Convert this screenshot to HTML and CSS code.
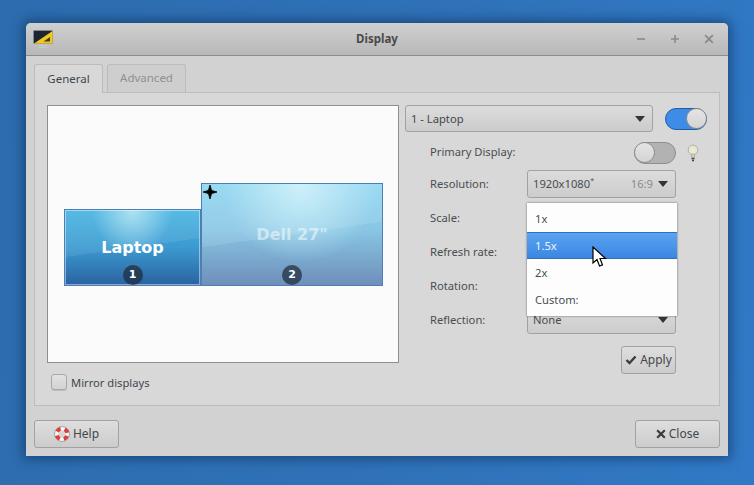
FILE: index.html
```html
<!DOCTYPE html>
<html lang="en">
<head>
  <meta charset="utf-8">
  <title>Display</title>
  <link rel="stylesheet" href="styles.css">
</head>
<body>
<div class="window">
  <header class="titlebar">
    <svg class="app-icon" width="20" height="18" viewBox="0 0 20 18">
      <rect x="0.3" y="0.3" width="19.4" height="13.4" fill="#1d2530" stroke="#a8a8a8" stroke-width="0.6"/>
      <path d="M1 13.5 L19.5 1 L19.5 13.5 Z" fill="#f0c91e"/>
      <path d="M10.5 11.5 L17 7 L17 11.5 Z" fill="#3f3e30"/>
      <rect x="6" y="15" width="8" height="1" fill="#c4ccd4"/>
      <rect x="6" y="17" width="8" height="1" fill="#c4ccd4"/>
    </svg>
    <span class="title">Display</span>
    <div class="win-buttons">
      <svg width="10" height="10" viewBox="0 0 10 10"><path d="M1 5H9" stroke="#8a8a8a" stroke-width="1.6"/></svg>
      <svg width="10" height="10" viewBox="0 0 10 10"><path d="M1 5H9M5 1V9" stroke="#8a8a8a" stroke-width="1.6"/></svg>
      <svg width="10" height="10" viewBox="0 0 10 10"><path d="M1.2 1.2L8.8 8.8M8.8 1.2L1.2 8.8" stroke="#8a8a8a" stroke-width="1.8"/></svg>
    </div>
  </header>

  <div class="content">
    <div class="tabs">
      <div class="tab active">General</div>
      <div class="tab">Advanced</div>
    </div>
    <div class="panel">
      <div class="left">
        <div class="preview">
          <div class="monitor laptop">
            <span class="mon-name">Laptop</span>
            <span class="badge">1</span>
          </div>
          <div class="monitor dell">
            <svg class="star" width="16" height="16" viewBox="0 0 16 16"><path d="M8 1 L9.6 6.4 L15 8 L9.6 9.6 L8 15 L6.4 9.6 L1 8 L6.4 6.4 Z" fill="#000" stroke="#000" stroke-width="0.8"/></svg>
            <span class="mon-name">Dell 27"</span>
            <span class="badge">2</span>
          </div>
        </div>
        <label class="mirror"><span class="checkbox"></span>Mirror displays</label>
      </div>

      <div class="right">
        <div class="top-row">
          <div class="combo main-combo"><span>1 - Laptop</span><i class="arrow"></i></div>
          <div class="switch on"><span class="knob"></span></div>
        </div>

        <div class="form">
          <div class="row primary">
            <span class="label">Primary Display:</span>
            <div class="switch off"><span class="knob"></span></div>
            <svg class="bulb" width="12" height="18" viewBox="0 0 12 18">
              <circle cx="6" cy="6" r="4.8" fill="#e6e6de" stroke="#b0b0a6"/>
              <circle cx="6" cy="6.5" r="2" fill="#f4eeb0"/>
              <path d="M4.5 10 L7.5 10 L7.5 13 L4.5 13 Z" fill="#d8d8c8" stroke="#9a9a90" stroke-width="0.6"/>
              <path d="M4.5 14.5H7.5M5 16.5H7" stroke="#444" stroke-width="1.4"/>
            </svg>
          </div>
          <div class="row">
            <span class="label">Resolution:</span>
            <div class="combo field"><span>1920x1080<sup>*</sup></span><em>16:9</em><i class="arrow"></i></div>
          </div>
          <div class="row"><span class="label">Scale:</span></div>
          <div class="row"><span class="label">Refresh rate:</span></div>
          <div class="row"><span class="label">Rotation:</span></div>
          <div class="row">
            <span class="label">Reflection:</span>
            <div class="combo field"><span>None</span><i class="arrow"></i></div>
          </div>
          <div class="apply-row">
            <button class="btn apply">
              <svg width="12" height="10" viewBox="0 0 12 10"><path d="M1.5 5 L4.5 8 L10.5 1.5" fill="none" stroke="#3c3c3c" stroke-width="2.4"/></svg>
              <span>Apply</span>
            </button>
          </div>

          <div class="menu">
            <div class="item">1x</div>
            <div class="item selected">1.5x</div>
            <div class="item">2x</div>
            <div class="item">Custom:</div>
            <svg class="cursor" width="16" height="24" viewBox="0 0 16 24">
              <path d="M1 1 L1 17 L5 13.5 L7.5 20 L10.5 18.8 L8 12.5 L13.5 12.5 Z" fill="#fff" stroke="#000" stroke-width="1.2"/>
            </svg>
          </div>
        </div>
      </div>
    </div>

    <div class="actions">
      <button class="btn wide">
        <svg width="16" height="16" viewBox="0 0 16 16">
          <circle cx="8" cy="8" r="5.5" fill="none" stroke="#f4f4f4" stroke-width="4"/>
          <circle cx="8" cy="8" r="5.5" fill="none" stroke="#e03a3a" stroke-width="4" stroke-dasharray="4.32 4.32" stroke-dashoffset="-2.16"/>
          <circle cx="8" cy="8" r="7.5" fill="none" stroke="#8a8a8a" stroke-width="0.7"/>
        </svg>
        <span>Help</span>
      </button>
      <button class="btn wide">
        <svg width="10" height="10" viewBox="0 0 10 10"><path d="M1.2 1.2L8.8 8.8M8.8 1.2L1.2 8.8" stroke="#3c3c3c" stroke-width="2.2"/></svg>
        <span>Close</span>
      </button>
    </div>
  </div>
</div>
</body>
</html>
```

FILE: styles.css
```css
* {
  box-sizing: border-box;
}
html, body {
  height: 100%;
}
body {
  margin: 0;
  padding: 23px 26px 0;
  background: linear-gradient(100deg, #2d6cae 0%, #2f72b8 55%, #3179c6 100%);
  font-family: "Noto Sans", sans-serif;
  font-size: 11.2px;
  color: #43474c;
  overflow: hidden;
}
.window {
  width: 702px;
  height: 433px;
  background: #d2d2d2;
  border-radius: 5px 5px 0 0;
  box-shadow: 0 0 12px 3px rgba(10, 40, 80, 0.55);
  display: flex;
  flex-direction: column;
}
.titlebar {
  height: 33px;
  padding: 0 14px 0 7px;
  display: flex;
  align-items: center;
  justify-content: space-between;
  background: linear-gradient(#d0d0d0, #b8b8b8);
  border-bottom: 1px solid #8c8c8c;
  border-radius: 5px 5px 0 0;
  position: relative;
}
.title {
  font-size: 11.5px;
  font-weight: 700;
  color: #4a4a4a;
  position: absolute;
  left: 0;
  right: 0;
  top: 8px;
  text-align: center;
}
.win-buttons {
  display: flex;
  gap: 24px;
}
.content {
  flex: 1;
  padding: 8px;
  display: flex;
  flex-direction: column;
}
.tabs {
  display: flex;
  gap: 4px;
  height: 29px;
  position: relative;
  z-index: 1;
  font-size: 11.5px;
}
.tab {
  width: 79px;
  height: 28px;
  padding-top: 5px;
  text-align: center;
  color: #909090;
  background: #cecece;
  border: 1px solid #bcbcbc;
  border-bottom: none;
  border-radius: 3px 3px 0 0;
}
.tab.active {
  width: 69px;
  height: 29px;
  padding-top: 6px;
  color: #43474c;
  background: #d8d8d8;
}
.panel {
  height: 314px;
  margin-top: -1px;
  padding: 12px;
  background: #d8d8d8;
  border: 1px solid #bcbcbc;
  display: flex;
  gap: 6px;
}
.left {
  width: 352px;
}
.preview {
  height: 258px;
  background: #fbfbfb;
  border: 1px solid #8e8e8e;
  position: relative;
}
.monitor {
  position: absolute;
  border: 1px solid #4d7fb4;
  color: #fff;
  font-family: "DejaVu Sans", sans-serif;
  font-weight: 700;
  display: flex;
  flex-direction: column;
  align-items: center;
}
.laptop {
  left: 16px;
  top: 103px;
  width: 137px;
  height: 77px;
  background:
    linear-gradient(172deg, rgba(255, 255, 255, 0.08) 50%, rgba(255, 255, 255, 0) 50%),
    radial-gradient(ellipse at 50% 0, #a8dff0 0, rgba(168, 223, 240, 0) 42%),
    linear-gradient(#4ab5e2, #3b9ad0 50%, #2b62a0);
  box-shadow: inset 0 0 0 1px rgba(255, 255, 255, 0.45);
}
.dell {
  left: 153px;
  top: 77px;
  width: 182px;
  height: 103px;
  background:
    linear-gradient(172deg, rgba(255, 255, 255, 0.1) 50%, rgba(255, 255, 255, 0) 50%),
    radial-gradient(ellipse at 55% 0, #c8eef8 0, rgba(200, 238, 248, 0) 55%),
    linear-gradient(#8ed6f2, #88c6e4 45%, #6e8fba);
}
.mon-name {
  font-size: 16px;
  line-height: 18px;
}
.laptop .mon-name {
  margin-top: 29px;
}
.dell .mon-name {
  margin-top: 42px;
  color: rgba(255, 255, 255, 0.5);
}
.badge {
  margin-top: auto;
  width: 20px;
  height: 20px;
  border-radius: 50%;
  background: rgba(30, 40, 55, 0.7);
  font-size: 11px;
  line-height: 20px;
  text-align: center;
}
.star {
  position: absolute;
  left: 0;
  top: 0;
}
.mirror {
  margin: 11px 0 0 4px;
  display: flex;
  align-items: center;
  gap: 4px;
  height: 16px;
}
.checkbox {
  width: 16px;
  height: 16px;
  border: 1px solid #a8a8a8;
  border-radius: 3px;
  background: linear-gradient(#e2e2e2, #d2d2d2);
  box-shadow: 0 1px 0 rgba(0, 0, 0, 0.12);
}
.right {
  width: 302px;
}
.top-row {
  height: 27px;
  display: flex;
  align-items: center;
  justify-content: space-between;
}
.combo {
  display: flex;
  align-items: center;
  padding: 0 6px 0 5px;
  background: linear-gradient(#dcdcdc, #cccccc);
  border: 1px solid #a2a2a2;
  border-radius: 3px;
}
.combo span {
  flex: 1;
}
.field span,
.field em {
  margin-bottom: 2px;
}
.combo sup {
  font-size: 7px;
  line-height: 0;
}
.combo em {
  font-style: normal;
  color: #8b8b8b;
  margin-right: 5px;
}
.main-combo {
  width: 248px;
  height: 27px;
}
.arrow {
  width: 0;
  height: 0;
  margin-right: 1px;
  border-left: 5px solid transparent;
  border-right: 5px solid transparent;
  border-top: 6px solid #33363a;
}
.field {
  width: 149px;
  height: 28px;
}
.switch {
  width: 42px;
  height: 22px;
  border-radius: 11px;
  position: relative;
  display: flex;
  align-items: center;
}
.switch.on {
  background: #3e8be8;
  border: 1px solid #205e9f;
  justify-content: flex-end;
}
.switch.off {
  background: #b2b2b2;
  border: 1px solid #8e8e8e;
}
.knob {
  width: 21px;
  height: 21px;
  border-radius: 50%;
  background: linear-gradient(#e4e4e4, #d4d4d4);
  border: 1px solid #8e8e8e;
  flex: none;
  margin: 0 -1px;
}
.form {
  position: relative;
  padding-left: 25px;
  padding-top: 1px;
}
.row {
  height: 34px;
  display: flex;
  align-items: center;
  color: #4a4d50;
}
.label {
  width: 97px;
  flex: none;
  margin-bottom: 2px;
}
.row.primary {
  padding-top: 5px;
}
.primary .label {
  width: 204px;
}
.bulb {
  margin-left: 11px;
}
.apply-row {
  display: flex;
  justify-content: flex-end;
  width: 246px;
  margin-top: 9px;
}
.btn {
  font: inherit;
  font-size: 12px;
  color: #43474c;
  height: 28px;
  padding: 0 0 1px;
  display: inline-flex;
  align-items: center;
  justify-content: center;
  gap: 3px;
  background: linear-gradient(#dedede, #cccccc);
  border: 1px solid #a2a2a2;
  border-radius: 3px;
}
.apply {
  width: 55px;
}
.menu {
  position: absolute;
  left: 122px;
  top: 71px;
  width: 150px;
  height: 113px;
  padding-top: 2px;
  background: #fdfdfd;
  box-shadow: 0 0 2px rgba(0, 0, 0, 0.55);
}
.item {
  height: 27px;
  padding: 0 8px;
  display: flex;
  align-items: center;
  color: #4a4d50;
}
.item.selected {
  background: linear-gradient(#5ba4f3, #3b86e2);
  border-top: 1px solid #2e71bc;
  border-bottom: 1px solid #2e71bc;
  color: #eef5fd;
}
.cursor {
  position: absolute;
  left: 65px;
  top: 43px;
}
.actions {
  margin-top: 14px;
  display: flex;
  justify-content: space-between;
}
.wide {
  width: 85px;
}
```
